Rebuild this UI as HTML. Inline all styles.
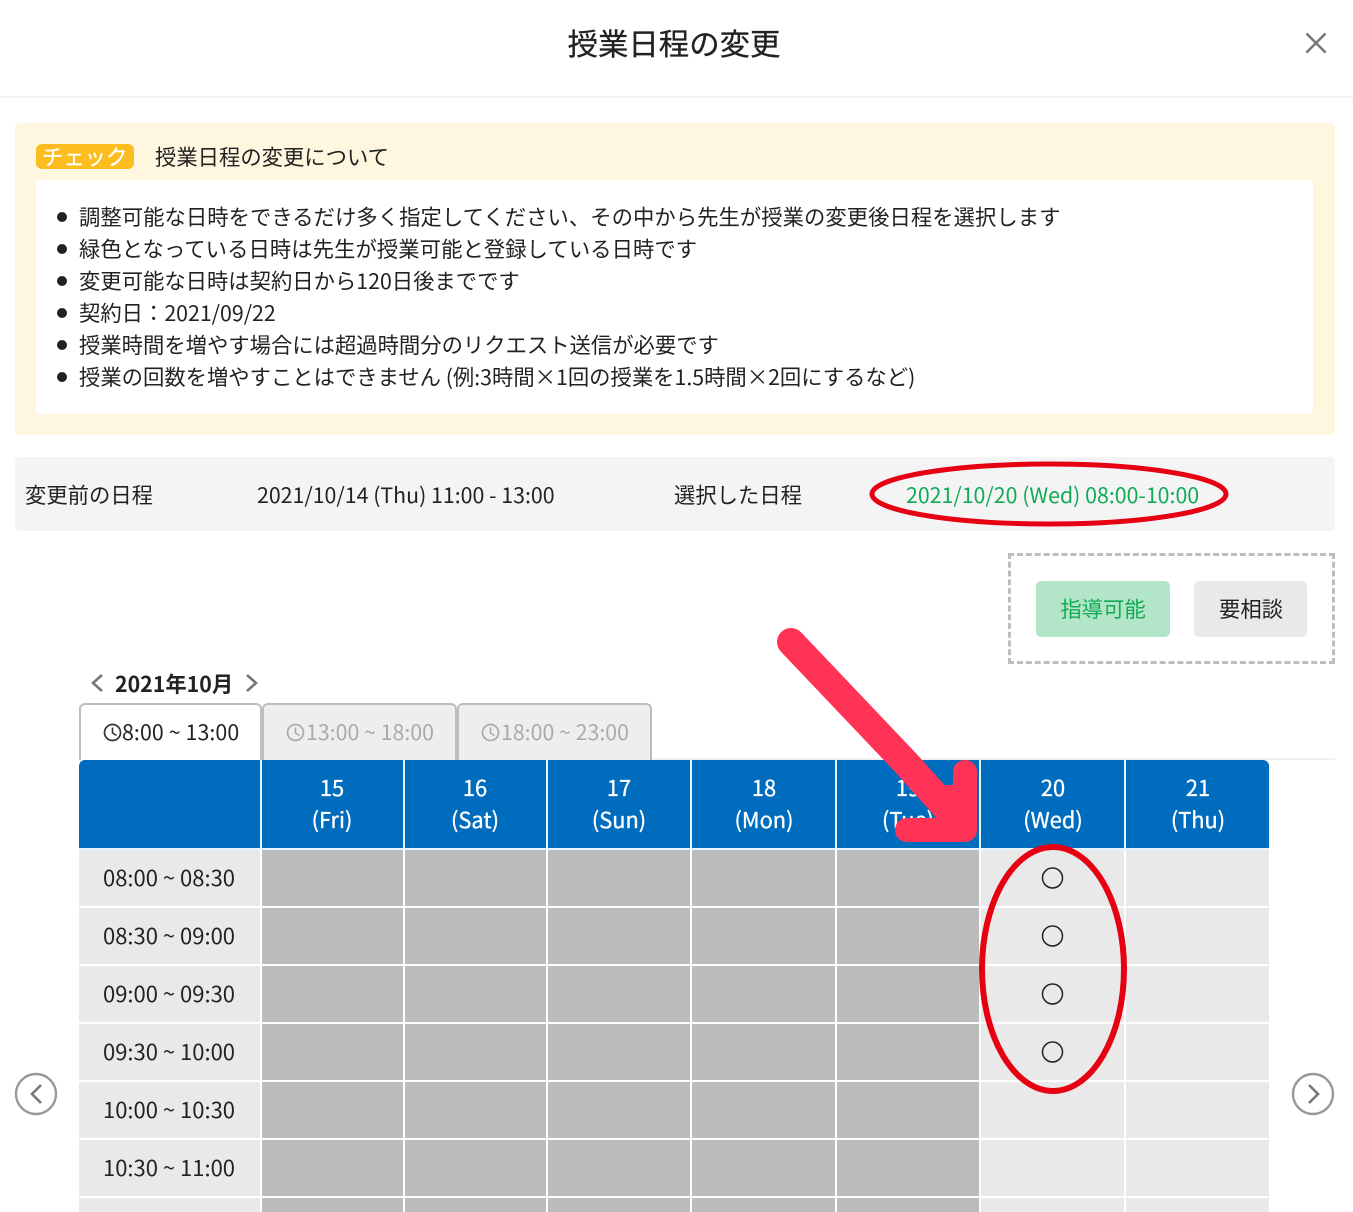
<!DOCTYPE html>
<html lang="ja"><head><meta charset="utf-8"><style>
html,body{margin:0;padding:0;background:#fff}
body{width:1353px;height:1212px;position:relative;overflow:hidden;font-family:"Noto Sans CJK JP","Liberation Sans",sans-serif;color:#222;font-size:21.33px}
.a,.t{position:absolute}
.t{white-space:nowrap;line-height:32px}
.c{transform:translateX(-50%);text-align:center}
.h{color:#fff;-webkit-text-stroke:.35px #fff;font-size:21.8px}
.l{font-size:22px}
.g{position:absolute;background:#bcbcbc}
.e{position:absolute;background:#e9e9ea}
.dot{position:absolute;left:57px;width:10px;height:10px;border-radius:50%;background:#222}
.tab{position:absolute;top:703px;height:57px;box-sizing:border-box;border:2px solid #bdbdbd;border-bottom:0;border-radius:6px 6px 0 0;background:#eee;color:#aaa}
svg{position:absolute;overflow:visible}
</style></head><body>
<div class="t c" style="left:674px;top:20px;font-size:30.4px;line-height:44px;color:#222;-webkit-text-stroke:.3px #222">授業日程の変更</div>
<svg style="left:1305px;top:32px" width="22" height="22"><path d="M1.5 1.5L20.5 20.5M20.5 1.5L1.5 20.5" stroke="#777" stroke-width="2.6" fill="none"/></svg>
<div class="a" style="left:0;top:96px;width:1353px;height:2px;background:#f3f3f3"></div>

<div class="a" style="left:15px;top:123px;width:1320px;height:312px;background:#fff6df;border-radius:5px"></div>
<div class="a" style="left:36px;top:144px;width:98px;height:25px;background:#fdbd1f;border-radius:6px"></div>
<div class="t" style="left:42px;top:141px;color:#fff;font-size:21.33px;-webkit-text-stroke:.3px #fff">チェック</div>
<div class="t" style="left:155px;top:141px">授業日程の変更について</div>
<div class="a" style="left:36px;top:180px;width:1277px;height:234px;background:#fff;border-radius:4px"></div>
<div class="dot" style="top:212px"></div><div class="t" style="left:79px;top:201px;letter-spacing:.045px">調整可能な日時をできるだけ多く指定してください、その中から先生が授業の変更後日程を選択します</div>
<div class="dot" style="top:244px"></div><div class="t" style="left:79px;top:233px;letter-spacing:.07px">緑色となっている日時は先生が授業可能と登録している日時です</div>
<div class="dot" style="top:276px"></div><div class="t" style="left:79px;top:265px">変更可能な日時は契約日から120日後までです</div>
<div class="dot" style="top:308px"></div><div class="t" style="left:79px;top:297px">契約日：2021/09/22</div>
<div class="dot" style="top:340px"></div><div class="t" style="left:79px;top:329px">授業時間を増やす場合には超過時間分のリクエスト送信が必要です</div>
<div class="dot" style="top:372px"></div><div class="t" style="left:79px;top:361px">授業の回数を増やすことはできません (例:3時間×1回の授業を1.5時間×2回にするなど)</div>

<div class="a" style="left:15px;top:457px;width:1320px;height:74px;background:#f4f4f5;border-radius:5px"></div>
<div class="t" style="left:25px;top:479px">変更前の日程</div>
<div class="t" style="left:257px;top:479px">2021/10/14 (Thu) 11:00 - 13:00</div>
<div class="t" style="left:674px;top:479px">選択した日程</div>
<div class="t" style="left:906px;top:479px;color:#10ab54">2021/10/20 (Wed) 08:00-10:00</div>

<div class="a" style="left:1008px;top:553px;width:327px;height:111px;box-sizing:border-box;border:3px dashed #bdbdbd"></div>
<div class="a" style="left:1036px;top:581px;width:134px;height:56px;background:#b3e6c8;border-radius:5px"></div>
<div class="t c" style="left:1103px;top:593px;color:#10ab54">指導可能</div>
<div class="a" style="left:1194px;top:581px;width:113px;height:56px;background:#e9e9ea;border-radius:5px"></div>
<div class="t c" style="left:1251px;top:593px">要相談</div>

<svg style="left:90px;top:673px" width="14" height="20"><path d="M12 2L3 10L12 18" stroke="#777" stroke-width="2.6" fill="none"/></svg>
<div class="t" style="left:115px;top:668px;font-weight:700;font-size:21.33px">2021年10月</div>
<svg style="left:245px;top:673px" width="14" height="20"><path d="M2 2L11 10L2 18" stroke="#777" stroke-width="2.6" fill="none"/></svg>

<div class="a" style="left:262px;top:758px;width:1073px;height:2px;background:#f0f0f0"></div>
<div class="tab" style="left:79px;width:183px;background:#fff;color:#222"></div>
<div class="tab" style="left:262px;width:195px"></div>
<div class="tab" style="left:457px;width:195px"></div>
<svg style="left:103px;top:723px" width="19" height="19"><circle cx="9.5" cy="9.5" r="8" stroke="#333" stroke-width="1.7" fill="none"/><path d="M9.5 4.5V10L13.5 12.5" stroke="#333" stroke-width="1.6" fill="none"/></svg>
<div class="t" style="left:122px;top:716px;letter-spacing:.1px">8:00 ~ 13:00</div>
<svg style="left:286px;top:723px" width="19" height="19"><circle cx="9.5" cy="9.5" r="8" stroke="#aaa" stroke-width="1.7" fill="none"/><path d="M9.5 4.5V10L13.5 12.5" stroke="#aaa" stroke-width="1.6" fill="none"/></svg>
<div class="t" style="left:306px;top:716px;color:#aaa">13:00 ~ 18:00</div>
<svg style="left:481px;top:723px" width="19" height="19"><circle cx="9.5" cy="9.5" r="8" stroke="#aaa" stroke-width="1.7" fill="none"/><path d="M9.5 4.5V10L13.5 12.5" stroke="#aaa" stroke-width="1.6" fill="none"/></svg>
<div class="t" style="left:501px;top:716px;color:#aaa">18:00 ~ 23:00</div>

<div class="a" style="left:79px;top:848px;width:1190px;height:2px;background:#e8f4fb"></div>
<div class="a" style="left:79px;top:760px;width:1190px;height:88px;background:#006cbe;border-radius:6px 6px 0 0"></div>
<div class="a" style="left:259.5px;top:760px;width:2px;height:88px;background:#e8f4fb"></div>
<div class="a" style="left:402.5px;top:760px;width:2px;height:88px;background:#e8f4fb"></div>
<div class="a" style="left:545.5px;top:760px;width:2px;height:88px;background:#e8f4fb"></div>
<div class="a" style="left:689.5px;top:760px;width:2px;height:88px;background:#e8f4fb"></div>
<div class="a" style="left:834.5px;top:760px;width:2px;height:88px;background:#e8f4fb"></div>
<div class="a" style="left:979px;top:760px;width:2px;height:88px;background:#e8f4fb"></div>
<div class="a" style="left:1124px;top:760px;width:2px;height:88px;background:#e8f4fb"></div>
<div class="t c h" style="left:332px;top:772px">15<br>(Fri)</div>
<div class="t c h" style="left:475px;top:772px">16<br>(Sat)</div>
<div class="t c h" style="left:619px;top:772px">17<br>(Sun)</div>
<div class="t c h" style="left:764px;top:772px">18<br>(Mon)</div>
<div class="t c h" style="left:908px;top:772px">19<br>(Tue)</div>
<div class="t c h" style="left:1053px;top:772px">20<br>(Wed)</div>
<div class="t c h" style="left:1198px;top:772px">21<br>(Thu)</div>

<!-- grid -->
<div class="e" style="left:79px;top:850px;width:181px;height:362px"></div>
<div class="g" style="left:260px;top:850px;width:720px;height:362px"></div>
<div class="e" style="left:980px;top:850px;width:289px;height:362px"></div>
<div class="a" style="left:259.5px;top:850px;width:2px;height:362px;background:#fff"></div>
<div class="a" style="left:402.5px;top:850px;width:2px;height:362px;background:#fff"></div>
<div class="a" style="left:545.5px;top:850px;width:2px;height:362px;background:#fff"></div>
<div class="a" style="left:689.5px;top:850px;width:2px;height:362px;background:#fff"></div>
<div class="a" style="left:834.5px;top:850px;width:2px;height:362px;background:#fff"></div>
<div class="a" style="left:979px;top:850px;width:2px;height:362px;background:#fff"></div>
<div class="a" style="left:1124px;top:850px;width:2px;height:362px;background:#fff"></div>
<div class="a" style="left:79px;top:906px;width:1190px;height:2px;background:#fff"></div>
<div class="a" style="left:79px;top:964px;width:1190px;height:2px;background:#fff"></div>
<div class="a" style="left:79px;top:1022px;width:1190px;height:2px;background:#fff"></div>
<div class="a" style="left:79px;top:1080px;width:1190px;height:2px;background:#fff"></div>
<div class="a" style="left:79px;top:1138px;width:1190px;height:2px;background:#fff"></div>
<div class="a" style="left:79px;top:1196px;width:1190px;height:2px;background:#fff"></div>
<div class="t c l" style="left:169px;top:861px">08:00 ~ 08:30</div>
<div class="t c l" style="left:169px;top:919px">08:30 ~ 09:00</div>
<div class="t c l" style="left:169px;top:977px">09:00 ~ 09:30</div>
<div class="t c l" style="left:169px;top:1035px">09:30 ~ 10:00</div>
<div class="t c l" style="left:169px;top:1093px">10:00 ~ 10:30</div>
<div class="t c l" style="left:169px;top:1151px">10:30 ~ 11:00</div>

<svg style="left:0;top:0" width="1353" height="1212">
<circle cx="1052.5" cy="878" r="10" fill="none" stroke="#222" stroke-width="1.5"/>
<circle cx="1052.5" cy="936" r="10" fill="none" stroke="#222" stroke-width="1.5"/>
<circle cx="1052.5" cy="994" r="10" fill="none" stroke="#222" stroke-width="1.5"/>
<circle cx="1052.5" cy="1052" r="10" fill="none" stroke="#222" stroke-width="1.5"/>
<circle cx="36" cy="1094" r="20" fill="none" stroke="#999" stroke-width="2.4"/>
<path d="M41 1085L32 1094L41 1103" fill="none" stroke="#777" stroke-width="2.6"/>
<circle cx="1313" cy="1094" r="20" fill="none" stroke="#999" stroke-width="2.4"/>
<path d="M1309 1085L1318 1094L1309 1103" fill="none" stroke="#777" stroke-width="2.6"/>
<ellipse cx="1049" cy="494" rx="177" ry="30" fill="none" stroke="#e60012" stroke-width="5"/>
<ellipse cx="1053" cy="969" rx="71" ry="122" fill="none" stroke="#e60012" stroke-width="6"/>
<path d="M791 642L905 762L950 812" fill="none" stroke="#ff3355" stroke-width="28" stroke-linecap="round" stroke-linejoin="round"/>
<path d="M965 772V830H907" fill="none" stroke="#ff3355" stroke-width="24" stroke-linecap="round" stroke-linejoin="round"/>
<path d="M945 785L965 785L965 830L935 820Z" fill="#ff3355"/>
</svg>
</body></html>
